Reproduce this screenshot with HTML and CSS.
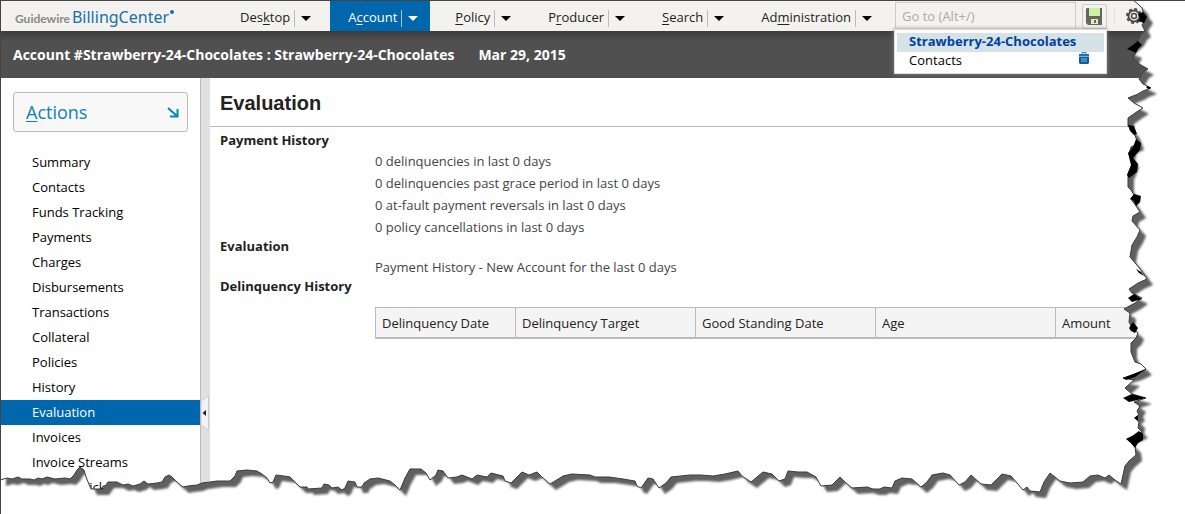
FILE: index.html
```html
<!DOCTYPE html>
<html lang="en">
<head>
<meta charset="utf-8">
<title>BillingCenter - Evaluation</title>
<link rel="stylesheet" href="styles.css">
</head>
<body>
<div class="page">
  <header class="topbar">
    <div class="brand"><span class="brand-maker">Guidewire</span><span class="brand-product">BillingCenter</span><span class="brand-dot"></span></div>
    <nav class="tabs">
      <div class="tab"><a href="#">Des<u>k</u>top</a><button class="tab-menu" aria-label="Desktop menu"></button></div>
      <div class="tab tab-active"><a href="#">A<u>c</u>count</a><button class="tab-menu" aria-label="Account menu"></button></div>
      <div class="tab"><a href="#"><u>P</u>olicy</a><button class="tab-menu" aria-label="Policy menu"></button></div>
      <div class="tab"><a href="#">P<u>r</u>oducer</a><button class="tab-menu" aria-label="Producer menu"></button></div>
      <div class="tab"><a href="#"><u>S</u>earch</a><button class="tab-menu" aria-label="Search menu"></button></div>
      <div class="tab"><a href="#">Ad<u>m</u>inistration</a><button class="tab-menu" aria-label="Administration menu"></button></div>
    </nav>
    <div class="tools">
      <input class="goto" type="text" placeholder="Go to (Alt+/)" aria-label="Go to">
      <button class="save" aria-label="Save">
        <svg width="17" height="17" viewBox="0 0 17 17"><path d="M1 0h15v17H2l-2-2V1z" fill="#656565"/><path d="M3 0h11v8H3z" fill="#cdf0a5"/><path d="M5 11h7v5H5z" fill="#d6f5b2"/><path d="M8 12h2v3H8z" fill="#656565"/></svg>
      </button>
      <span class="tool-line"></span>
      <button class="gear" aria-label="Settings">
        <svg width="18" height="18" viewBox="0 0 18 18" fill="none" stroke="#4a4a4a"><circle cx="9" cy="9" r="7" stroke-width="2" stroke-dasharray="3 2.5"/><circle cx="9" cy="9" r="5.5" stroke-width="2"/><circle cx="9" cy="9" r="2.5" stroke-width="1.5"/></svg>
      </button>
      <div class="suggest">
        <a class="suggest-row suggest-selected" href="#">Strawberry-24-Chocolates</a>
        <a class="suggest-row" href="#">Contacts
          <svg width="12" height="12" viewBox="0 0 12 12"><path d="M4 2V.7h4V2" fill="none" stroke="#1b73b4"/><path d="M1 2h10v2H1z" fill="#1b73b4"/><path d="M1 4.5h10V11l-1 1H2l-1-1z" fill="#075f9f"/><path d="M4 6v4M6 6v4M8 6v4" stroke="#83b7df"/></svg>
        </a>
      </div>
    </div>
  </header>
  <div class="infobar"><span>Account #Strawberry-24-Chocolates : Strawberry-24-Chocolates</span><span>Mar 29, 2015</span></div>
  <div class="workspace">
    <aside class="sidebar">
      <button class="actions"><span><u>A</u>ctions</span>
        <svg width="12" height="12" viewBox="0 0 12 12" fill="none" stroke="#0588b0" stroke-width="2"><path d="M1 2l9 8M10.500 3v7.500H3"/></svg>
      </button>
      <nav class="menu">
        <a href="#">Summary</a>
        <a href="#">Contacts</a>
        <a href="#">Funds Tracking</a>
        <a href="#">Payments</a>
        <a href="#">Charges</a>
        <a href="#">Disbursements</a>
        <a href="#">Transactions</a>
        <a href="#">Collateral</a>
        <a href="#">Policies</a>
        <a href="#">History</a>
        <a class="current" href="#">Evaluation</a>
        <a href="#">Invoices</a>
        <a href="#">Invoice Streams</a>
        <a href="#">Trouble Tickets</a>
      </nav>
    </aside>
    <div class="splitter">
      <button class="collapse" aria-label="Collapse sidebar">
        <svg width="9" height="36" viewBox="0 0 9 36"><path d="M0 6L7.5.8v34.4L0 30z" fill="#f2f2f2" stroke="#ccc"/><path d="M5 15v6l-3.5-3z" fill="#222"/></svg>
      </button>
    </div>
    <main class="content">
      <h1>Evaluation</h1>
      <div class="details">
        <h2>Payment History</h2>
        <p>0 delinquencies in last 0 days</p>
        <p>0 delinquencies past grace period in last 0 days</p>
        <p>0 at-fault payment reversals in last 0 days</p>
        <p>0 policy cancellations in last 0 days</p>
        <h2>Evaluation</h2>
        <p>Payment History - New Account for the last 0 days</p>
        <h2>Delinquency History</h2>
        <table class="history">
          <thead><tr><th class="col-date">Delinquency Date</th><th>Delinquency Target</th><th>Good Standing Date</th><th>Age</th><th>Amount</th></tr></thead>
        </table>
      </div>
    </main>
  </div>
  <svg class="torn-edge" viewBox="0 0 1185 514" preserveAspectRatio="none" aria-hidden="true">
    <defs>
      <path id="sheet" d="M0 0H1133L1138 4L1142 8L1143 12L1147 17L1144 22L1142 25L1145 31L1141 34L1138 40L1128 49L1136 52L1133 58L1139 64L1148 69L1143 72L1139 79L1143 84L1151 88L1143 91L1138 94L1128 98L1134 103L1143 108L1138 111L1128 118V126L1133 131L1136 138L1138 144L1131 147L1129 154L1133 162L1128 174V187L1131 190L1134 195L1131 199L1136 206L1140 212L1133 216L1132 221L1140 230L1137 237L1132 245L1130 257L1136 264L1140 269L1147 279L1138 283L1129 289L1132 293L1142 298L1135 303L1124 309L1130 313L1129 322L1132 328L1138 333L1136 338L1131 343V352L1135 362L1141 364L1146 369L1136 374L1123 378L1134 380L1125 388L1132 394L1146 398L1134 402L1140 406L1137 411L1139 415L1135 418L1139 422L1138 428L1142 432L1127 439L1135 447L1136 455L1129 461L1125 466L1121 484L1115 480L1109 475L1105 478L1098 475L1090 476L1083 482L1070 483L1060 481L1050 473L1044 482L1040 492L1030 491L1027 487L1023 490L1011 476L1002 474L997 479L991 485L981 484L971 475L965 482L959 485L950 475L943 473L932 475L927 482L921 487L912 479L902 478L895 481L892 488L884 487L880 489L873 489L867 487L852 488L845 482L840 477L832 485L821 486L816 477L807 472L798 472L788 471L785 479L779 481L772 474L763 472L757 477L751 482L742 476L738 471L725 474L713 476L701 475L690 475L671 477L666 483L659 488L653 479L648 478L641 488L637 486L635 481L623 479L609 477L595 477L590 475L572 474L563 476L555 481L550 484L542 477L537 472L529 475L522 472L517 477L511 483L505 481L503 476L491 473L487 477L477 475L472 479L462 475L457 477L448 478L443 471L438 470L436 475L430 480L426 473L421 469H410L405 478L400 490L395 485L390 481L378 478L370 479L364 483L362 487H357L355 482L348 481L345 488L342 490L338 487L332 488L329 485L324 484L322 488L308 489L307 487H300L296 483L290 477L284 476L276 475L273 482L270 483L267 478L262 474L257 471L247 470L237 471L235 476L230 481L217 481L210 482L202 483L197 485L188 486L183 487L177 482L172 477L169 475L165 477L162 482L157 483L148 484L144 481L140 484L133 486L128 484L123 485L117 482H108L106 485L103 489H91L86 477L84 470L80 467L77 470L74 475L70 479L65 478L55 479L47 477L42 479L38 478L34 480L30 479H22L18 477L12 479L7 478L0 480Z"/>
      <path id="outer" clip-rule="evenodd" fill-rule="evenodd" d="M-5-5H1190V519H-5ZM0 0H1133L1138 4L1142 8L1143 12L1147 17L1144 22L1142 25L1145 31L1141 34L1138 40L1128 49L1136 52L1133 58L1139 64L1148 69L1143 72L1139 79L1143 84L1151 88L1143 91L1138 94L1128 98L1134 103L1143 108L1138 111L1128 118V126L1133 131L1136 138L1138 144L1131 147L1129 154L1133 162L1128 174V187L1131 190L1134 195L1131 199L1136 206L1140 212L1133 216L1132 221L1140 230L1137 237L1132 245L1130 257L1136 264L1140 269L1147 279L1138 283L1129 289L1132 293L1142 298L1135 303L1124 309L1130 313L1129 322L1132 328L1138 333L1136 338L1131 343V352L1135 362L1141 364L1146 369L1136 374L1123 378L1134 380L1125 388L1132 394L1146 398L1134 402L1140 406L1137 411L1139 415L1135 418L1139 422L1138 428L1142 432L1127 439L1135 447L1136 455L1129 461L1125 466L1121 484L1115 480L1109 475L1105 478L1098 475L1090 476L1083 482L1070 483L1060 481L1050 473L1044 482L1040 492L1030 491L1027 487L1023 490L1011 476L1002 474L997 479L991 485L981 484L971 475L965 482L959 485L950 475L943 473L932 475L927 482L921 487L912 479L902 478L895 481L892 488L884 487L880 489L873 489L867 487L852 488L845 482L840 477L832 485L821 486L816 477L807 472L798 472L788 471L785 479L779 481L772 474L763 472L757 477L751 482L742 476L738 471L725 474L713 476L701 475L690 475L671 477L666 483L659 488L653 479L648 478L641 488L637 486L635 481L623 479L609 477L595 477L590 475L572 474L563 476L555 481L550 484L542 477L537 472L529 475L522 472L517 477L511 483L505 481L503 476L491 473L487 477L477 475L472 479L462 475L457 477L448 478L443 471L438 470L436 475L430 480L426 473L421 469H410L405 478L400 490L395 485L390 481L378 478L370 479L364 483L362 487H357L355 482L348 481L345 488L342 490L338 487L332 488L329 485L324 484L322 488L308 489L307 487H300L296 483L290 477L284 476L276 475L273 482L270 483L267 478L262 474L257 471L247 470L237 471L235 476L230 481L217 481L210 482L202 483L197 485L188 486L183 487L177 482L172 477L169 475L165 477L162 482L157 483L148 484L144 481L140 484L133 486L128 484L123 485L117 482H108L106 485L103 489H91L86 477L84 470L80 467L77 470L74 475L70 479L65 478L55 479L47 477L42 479L38 478L34 480L30 479H22L18 477L12 479L7 478L0 480Z"/>
      <clipPath id="outside"><use href="#outer" clip-rule="evenodd"/></clipPath>
      <filter id="soft" x="-2%" y="-2%" width="104%" height="104%"><feGaussianBlur stdDeviation="1.3"/></filter>
    </defs>
    <use href="#outer" fill="#fff"/>
    <g clip-path="url(#outside)"><use href="#sheet" x="6" y="6" fill="#606060" filter="url(#soft)"/></g>
    <use href="#sheet" fill="none" stroke="#3c3a3c" stroke-width="1"/>
    <g fill="#000">
      <path d="M1138 14l5-2 4 5-3 6-6-2 2-3z"/>
      <path d="M1127 49l6-4 5-4 4 4-4 4-2 4-4-2z"/>
      <path d="M1146 87l2-1 3 2-3 1z"/>
      <path d="M1128 125l6 1 3 8-3 1-4-4z"/>
      <path d="M1136 139l5 4-1 7-7 8 5 6-1 8-8 6-2-3 4-10-3-12 5-6z"/>
      <path d="M1130 199l4-5 7 2-1 6-4 4-2-5z"/>
      <path d="M1136 269l5 3 3 4-5-3z"/>
      <path d="M1128 298l6-4 8 5-10 3z"/>
      <path d="M1129 328l4-6 5 6-3 5-4-2z"/>
      <path d="M1123 378l10-4 13-5-11 8-9 3z"/>
      <path d="M1123 398l9-4 14 4-17 4z"/>
      <path d="M1134 418l4-3v6z"/>
      <path d="M1126 439l6-3 7-5 4 3v6l-5 3-3 5-4-5z"/>
    </g>
  </svg>
</div>
</body>
</html>
```
FILE: styles.css
```css
* { box-sizing: border-box; }

body {
  margin: 0;
  background: #fff;
  color: #222;
  font: 13px/18px "Open Sans", sans-serif;
}

a { color: inherit; text-decoration: none; }
u { text-underline-offset: 2px; }
button { padding: 0; border: 0; background: none; font: inherit; color: inherit; }
svg { display: block; }

.page {
  position: relative;
  display: flex;
  flex-direction: column;
  height: 100vh;
  overflow: hidden;
  border-top: 1px solid #444;
  border-left: 1px solid #444;
}

.topbar {
  display: flex;
  flex: none;
  height: 30px;
  background: #f4f2ee;
}

.brand {
  display: flex;
  flex: none;
  align-items: baseline;
  width: 221px;
  padding: 4px 0 0 14px;
  line-height: 24px;
}
.brand-maker { color: #888; font-family: Lato, sans-serif; font-size: 12px; font-weight: bold; }
.brand-product { margin-left: 2px; color: #1470ae; font-family: "Noto Sans", sans-serif; font-size: 16px; }
.brand-dot { align-self: flex-start; width: 4px; height: 4px; margin: 5px 0 0 1px; border-radius: 50%; background: #1470ae; }

.tabs { display: flex; flex: none; gap: 7px; }
.tab { display: flex; align-items: center; padding: 4px 13px 0 18px; }
.tab a { padding-bottom: 2px; }
.tab-active { background: #0067ac; color: #fff; }
.tab-menu {
  display: flex;
  align-items: center;
  height: 17px;
  margin-left: 4px;
  padding-left: 7px;
  border-left: 1px solid #bbb;
}
.tab-menu::after {
  content: "";
  border: 5px solid transparent;
  border-top-color: #000;
  border-bottom: 0;
}
.tab-menu { padding-left: 6px; }
.tab { padding-right: 12px; }
.tab-active .tab-menu::after { border-top-color: #fff; }

.tools { position: relative; display: flex; flex: none; align-items: center; margin-left: 11px; }
.goto {
  width: 181px;
  height: 29px;
  padding: 0 6px;
  border: 1px solid #ccc;
  background: #f4f2ee;
  font: 13px/18px "Open Sans", sans-serif;
}
.goto::placeholder { color: #aaa; opacity: 1; }
.save {
  display: grid;
  place-items: center;
  width: 25px;
  height: 25px;
  margin-left: 6px;
  border: 1px solid #ccc;
  border-radius: 2px;
}
.tool-line { width: 1px; height: 14px; margin: 0 10px 0 7px; background: #ddd; }
.suggest {
  position: absolute;
  z-index: 1;
  top: 28px;
  left: -1px;
  width: 213px;
  padding: 3px 2px 2px;
  border: 1px solid #ddd;
  background: #fff;
  box-shadow: 0 0 4px #888;
  color: #000;
}
.suggest-row { display: flex; justify-content: space-between; height: 19px; padding: 0 14px 0 12px; line-height: 17px; }
.suggest-selected { background: #d5e3e8; color: #00419c; font-weight: bold; }

.infobar {
  display: flex;
  flex: none;
  gap: 24px;
  height: 47px;
  padding-left: 12px;
  background: linear-gradient(#3c3c3c, #505050 10px);
  color: #fff;
  font-size: 14px;
  font-weight: bold;
  line-height: 48px;
}

.workspace { display: flex; flex: 1; min-height: 0; }
.sidebar { flex: none; width: 199px; overflow: hidden; color: #000; }
.actions {
  display: flex;
  align-items: center;
  justify-content: space-between;
  width: 175px;
  height: 40px;
  margin: 14px 12px 18px;
  padding: 0 8px 0 12px;
  border: 1px solid #bbb;
  border-radius: 3px;
  background: #f8f8f8;
  color: #0b84ad;
  font-size: 18px;
}
.menu a { display: block; height: 25px; padding-left: 31px; line-height: 24px; }
.menu .current { background: #0067ac; color: #fff; }

.splitter { flex: none; width: 10px; padding-top: 317px; border-left: 1px solid #bbb; background: #e0e0e0; }

.content { flex: 1; min-width: 0; }
.content h1 {
  margin: 0;
  padding: 3px 10px 0;
  border-bottom: 1px solid #bbb;
  font: bold 20px/45px "Liberation Sans", sans-serif;
}
.details { padding: 5px 0 0 10px; }
.details h2 { margin: 0; padding-bottom: 2px; font-size: 13px; line-height: 16px; }
.details p { margin: 0 0 0 155px; color: #444; line-height: 22px; }

.history {
  width: calc(100% - 155px);
  margin: 11px 0 0 155px;
  border-collapse: separate;
  border-spacing: 0;
  border: 1px solid #bbb;
  border-bottom-width: 2px;
  table-layout: fixed;
  background: #f4f4f4;
}
.history th { width: 180px; height: 29px; padding: 0 6px; border-left: 1px solid #bbb; font-weight: normal; text-align: left; }
.history .col-date { width: 139px; border-left: 0; }
.history th:last-child { width: auto; }

.torn-edge { position: absolute; top: -1px; left: -1px; width: calc(100% + 1px); height: calc(100% + 1px); pointer-events: none; }
```
